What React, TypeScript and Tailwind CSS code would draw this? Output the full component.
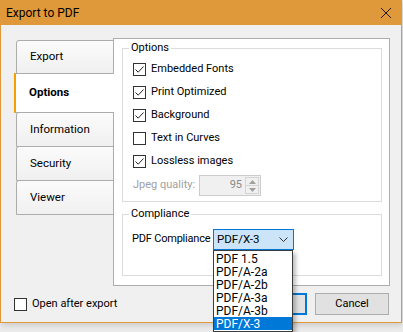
import { useState } from 'react';

const ORANGE = 'bg-[#e0993a]';

function CheckBox({ checked }: { checked: boolean }) {
  return (
    <span className="flex h-[13px] w-[13px] shrink-0 items-center justify-center border border-[#333333] bg-white">
      {checked && (
        <svg width="11" height="11" viewBox="0 0 11 11">
          <path d="M1.5 5.5 L4.2 8.2 L9.5 2.5" fill="none" stroke="#222222" strokeWidth="1" />
        </svg>
      )}
    </span>
  );
}

function Tab({ label, selected, h }: { label: string; selected?: boolean; h: string }) {
  if (selected) {
    return (
      <div className={`relative z-10 -mt-px flex w-[100px] items-center border-y border-l-2 border-y-[#acacac] border-l-[#f5a000] bg-white pl-[13px] font-bold ${h}`}>
        {label}
      </div>
    );
  }
  return (
    <div className={`-mt-px ml-[2px] flex w-[98px] items-center rounded-tl-[3px] border border-[#acacac] bg-gradient-to-b from-[#fbfbfb] to-[#f0f0f0] pl-[13px] first:mt-0 ${h}`}>
      {label}
    </div>
  );
}

const options = [
  { label: 'Embedded Fonts', checked: true },
  { label: 'Print Optimized', checked: true },
  { label: 'Background', checked: true },
  { label: 'Text in Curves', checked: false },
  { label: 'Lossless images', checked: true },
];

const compliance = ['PDF 1.5', 'PDF/A-2a', 'PDF/A-2b', 'PDF/A-3a', 'PDF/A-3b', 'PDF/X-3'];

export default function App() {
  const [value] = useState('PDF/X-3');

  return (
    <div className="relative h-[332px] w-[403px] overflow-hidden whitespace-nowrap bg-[#ebebeb] font-['Roboto',sans-serif] text-[11px] text-black">
      <div className="flex h-[323px] w-[402px] flex-col border-x border-b border-[#e0993a] bg-[#f0f0f0] shadow-[1px_2px_6px_rgba(0,0,0,0.15)]">
        {/* Title bar */}
        <div className={`flex h-[25px] shrink-0 items-center justify-between pl-[5px] pr-[9px] ${ORANGE}`}>
          <span className="text-[12px]">Export to PDF</span>
          <svg width="12" height="12" viewBox="0 0 12 12">
            <path d="M1 1 L11 11 M11 1 L1 11" stroke="#1a1a1a" strokeWidth="1" />
          </svg>
        </div>

        {/* Tabs + page */}
        <div className="mt-[13px] flex">
          <div className="ml-[13px] mt-[2px] -mr-px flex w-[100px] flex-col text-[11.5px]">
            <Tab label="Export" h="h-[34px]" />
            <Tab label="Options" selected h="h-[40px]" />
            <Tab label="Information" h="h-[35px]" />
            <Tab label="Security" h="h-[35px]" />
            <Tab label="Viewer" h="h-[35px]" />
          </div>

          <div className="flex h-[248px] w-[277px] flex-col border border-[#adadad] bg-white">
            <fieldset className="ml-[8px] mt-[2px] w-[260px] border border-[#dcdcdc] pb-[5px] pl-[10px]">
              <legend className="ml-[-4px] px-[2px] leading-[14px]">Options</legend>
              <div className="mt-[3px] flex flex-col">
                {options.map(o => (
                  <div key={o.label} className="flex h-[23px] items-center gap-[5px]">
                    <CheckBox checked={o.checked} />
                    <span>{o.label}</span>
                  </div>
                ))}
              </div>
              <div className="mt-[2px] flex h-[21px] items-center">
                <span className="w-[66px] text-[#a0a0a0]">Jpeg quality:</span>
                <div className="flex h-[21px] w-[62px] items-center border border-[#cccccc] bg-[#f0f0f0]">
                  <span className="flex-1 pr-[3px] text-right text-[#8a8a8a]">95</span>
                  <div className="mr-[1px] flex h-[17px] w-[14px] flex-col border border-[#d4d4d4]">
                    <div className="flex flex-1 items-center justify-center border-b border-[#d4d4d4]">
                      <svg width="7" height="4" viewBox="0 0 7 4"><path d="M0 4 L3.5 0 L7 4 Z" fill="#a0a0a0" /></svg>
                    </div>
                    <div className="flex flex-1 items-center justify-center">
                      <svg width="7" height="4" viewBox="0 0 7 4"><path d="M0 0 L3.5 4 L7 0 Z" fill="#a0a0a0" /></svg>
                    </div>
                  </div>
                </div>
              </div>
            </fieldset>

            <fieldset className="ml-[8px] mt-[5px] w-[260px] border border-[#dcdcdc] pb-[25px] pl-[9px]">
              <legend className="ml-[-3px] px-[2px] leading-[14px]">Compliance</legend>
              <div className="mt-[8px] flex h-[21px] items-center">
                <span className="w-[81px] shrink-0 tracking-[-0.2px]">PDF Compliance</span>
                <div className="flex h-[21px] w-[81px] items-center justify-between border border-[#0078d7] bg-[#cce4f7] pl-[3px] pr-[5px] text-[11.5px]">
                  <span>{value}</span>
                  <svg width="9" height="5" viewBox="0 0 9 5">
                    <path d="M0.5 0.5 L4.5 4.5 L8.5 0.5" fill="none" stroke="#333333" strokeWidth="1" />
                  </svg>
                </div>
              </div>
            </fieldset>
          </div>
        </div>

        {/* Bottom row */}
        <div className="mt-[7px] flex h-[22px] items-center">
          <div className="ml-[13px] flex flex-1 items-center gap-[5px]">
            <CheckBox checked={false} />
            <span>Open after export</span>
          </div>
          {/* OK button, mostly hidden behind the open list */}
          <button className="h-[22px] w-[75px] border-2 border-[#0078d7] bg-[#e1e1e1]" />
          <button className="ml-[8px] mr-[12px] h-[22px] w-[74px] border border-[#adadad] bg-[#e1e1e1]">Cancel</button>
        </div>
      </div>

      {/* Open dropdown list */}
      <div className="absolute left-[213px] top-[250px] flex w-[80px] flex-col border border-[#3c3c3c] bg-white py-px text-[12px] shadow-[3px_3px_4px_rgba(0,0,0,0.25)]">
        {compliance.map(c => (
          <div
            key={c}
            className={`flex h-[13px] items-center pl-[2px] ${c === value ? 'bg-[#0078d7] text-white' : ''}`}
          >
            {c}
          </div>
        ))}
      </div>
    </div>
  );
}
